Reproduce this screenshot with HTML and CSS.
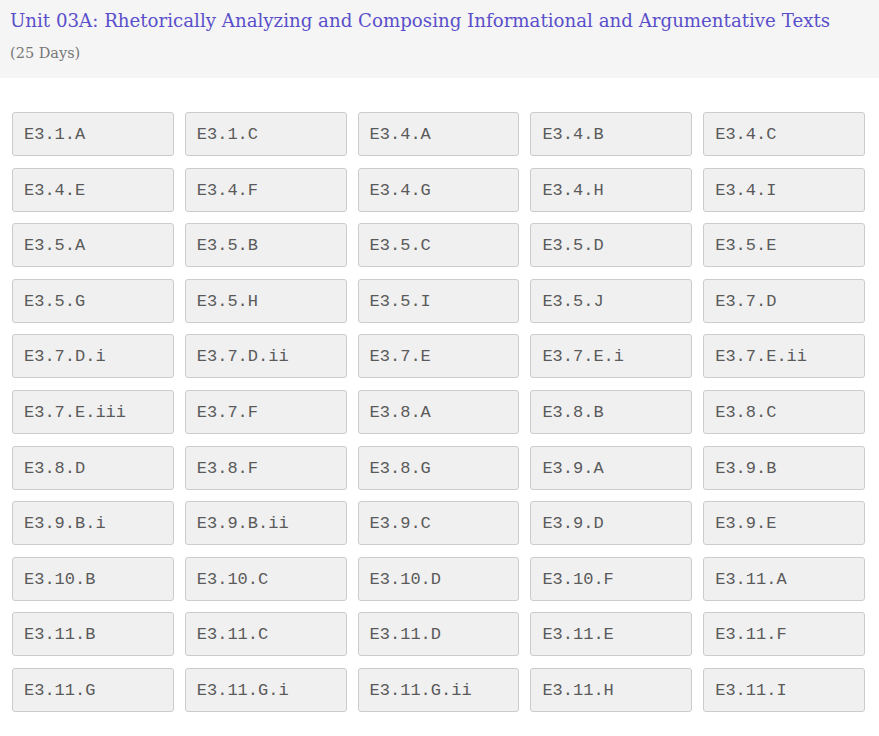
FILE: index.html
```html
<!DOCTYPE html>
<html>
<head>
<meta charset="utf-8">
<link rel="stylesheet" href="styles.css">
</head>
<body>
<header class="unit-header">
  <h1 class="unit-title">Unit 03A: Rhetorically Analyzing and Composing Informational and Argumentative Texts</h1>
  <div class="unit-days">(25 Days)</div>
</header>
<main class="standards">
  <div class="std">E3.1.A</div><div class="std">E3.1.C</div><div class="std">E3.4.A</div><div class="std">E3.4.B</div><div class="std">E3.4.C</div>
  <div class="std">E3.4.E</div><div class="std">E3.4.F</div><div class="std">E3.4.G</div><div class="std">E3.4.H</div><div class="std">E3.4.I</div>
  <div class="std">E3.5.A</div><div class="std">E3.5.B</div><div class="std">E3.5.C</div><div class="std">E3.5.D</div><div class="std">E3.5.E</div>
  <div class="std">E3.5.G</div><div class="std">E3.5.H</div><div class="std">E3.5.I</div><div class="std">E3.5.J</div><div class="std">E3.7.D</div>
  <div class="std">E3.7.D.i</div><div class="std">E3.7.D.ii</div><div class="std">E3.7.E</div><div class="std">E3.7.E.i</div><div class="std">E3.7.E.ii</div>
  <div class="std">E3.7.E.iii</div><div class="std">E3.7.F</div><div class="std">E3.8.A</div><div class="std">E3.8.B</div><div class="std">E3.8.C</div>
  <div class="std">E3.8.D</div><div class="std">E3.8.F</div><div class="std">E3.8.G</div><div class="std">E3.9.A</div><div class="std">E3.9.B</div>
  <div class="std">E3.9.B.i</div><div class="std">E3.9.B.ii</div><div class="std">E3.9.C</div><div class="std">E3.9.D</div><div class="std">E3.9.E</div>
  <div class="std">E3.10.B</div><div class="std">E3.10.C</div><div class="std">E3.10.D</div><div class="std">E3.10.F</div><div class="std">E3.11.A</div>
  <div class="std">E3.11.B</div><div class="std">E3.11.C</div><div class="std">E3.11.D</div><div class="std">E3.11.E</div><div class="std">E3.11.F</div>
  <div class="std">E3.11.G</div><div class="std">E3.11.G.i</div><div class="std">E3.11.G.ii</div><div class="std">E3.11.H</div><div class="std">E3.11.I</div>
</main>
</body>
</html>
```
FILE: styles.css
```css
html, body {
  margin: 0;
  padding: 0;
  background: #ffffff;
}
.unit-header {
  background: #f5f5f5;
  height: 78px;
  box-sizing: border-box;
  padding: 9px 10px 0 10px;
}
.unit-title {
  margin: 0;
  font-family: "DejaVu Serif", serif;
  font-weight: normal;
  font-size: 18.2px;
  line-height: 24px;
  color: #5a4fcb;
  white-space: nowrap;
}
.unit-days {
  margin-top: 10px;
  font-family: "DejaVu Serif", serif;
  font-size: 14.5px;
  line-height: 20px;
  color: #777777;
}
.standards {
  display: grid;
  grid-template-columns: repeat(5, 1fr);
  column-gap: 11px;
  row-gap: 11.6px;
  padding: 34px 14px 24px 12px;
}
.std {
  height: 44px;
  box-sizing: border-box;
  background: #f0f0f0;
  border: 1px solid #cccccc;
  border-radius: 3px;
  padding: 1px 11px 0 11px;
  display: flex;
  align-items: center;
  font-family: "Liberation Mono", monospace;
  font-size: 17px;
  color: #5a5a5a;
}
```
